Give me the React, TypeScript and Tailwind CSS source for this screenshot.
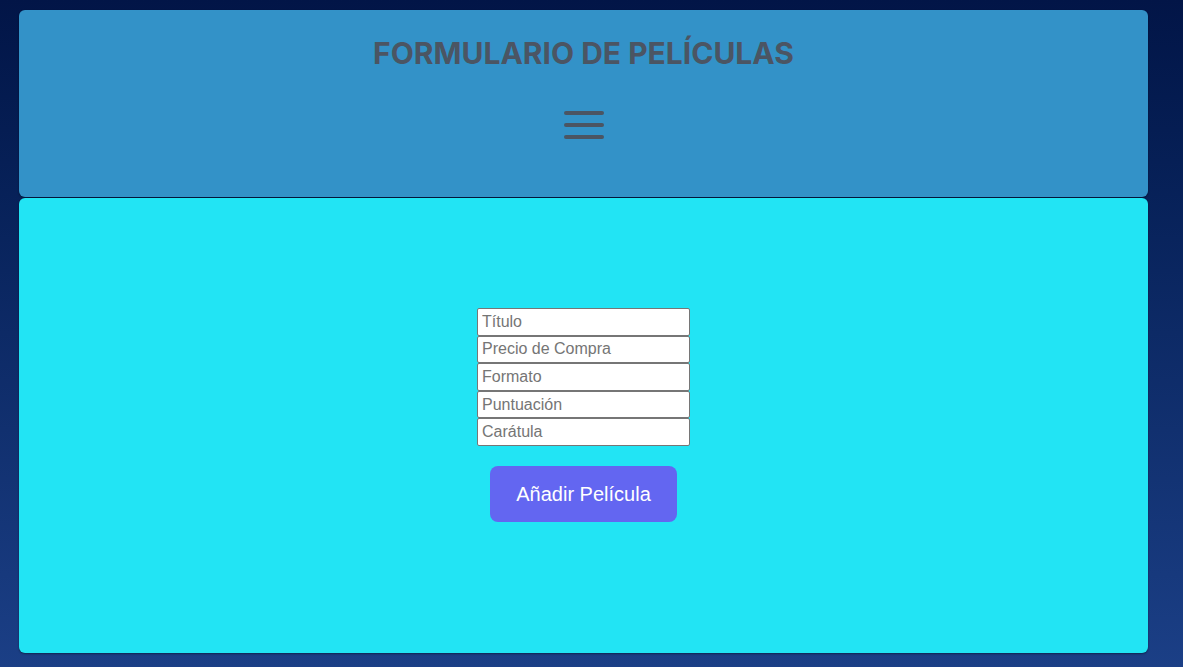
import React from "react";

const fields = ["Título", "Precio de Compra", "Formato", "Puntuación", "Carátula"];

export default function App() {
    return (
        <div className="min-h-screen w-full bg-gradient-to-b from-[#021547] via-[#0d2a66] to-[#1b3f86] pt-[10px] pb-[14px]">
            <div className="ml-[19px] w-[1129px] flex flex-col gap-px">
                {/* Header */}
                <header className="h-[187px] rounded-md bg-[#3392c8] shadow-[0_1px_2px_rgba(0,0,0,0.4)] flex flex-col items-center pt-[25px]">
                    <h1 className="text-[30px] leading-[36px] font-bold text-[#4b5563] font-['Inter',sans-serif]">
                        FORMULARIO DE PELÍCULAS
                    </h1>
                    <button className="mt-[40px] flex flex-col gap-[8px] w-[40px]">
                        <span className="block h-[4px] w-full rounded-full bg-[#4b5563]" />
                        <span className="block h-[4px] w-full rounded-full bg-[#4b5563]" />
                        <span className="block h-[4px] w-full rounded-full bg-[#4b5563]" />
                    </button>
                </header>

                {/* Form */}
                <main className="h-[455px] rounded-md bg-[#22e4f4] shadow-[0_1px_2px_rgba(0,0,0,0.4)] flex flex-col items-center pt-[110px]">
                    <form className="flex flex-col items-center" onSubmit={(e) => e.preventDefault()}>
                        <div className="flex flex-col w-[213px]">
                            {fields.map((f) => (
                                <input
                                    key={f}
                                    type="text"
                                    placeholder={f}
                                    className="h-[27.6px] w-full bg-white border border-[#767676] rounded-[2px] px-[4px] text-[16px] font-['Liberation_Sans',Arial,sans-serif] placeholder:text-[#757575] text-black outline-none"
                                />
                            ))}
                        </div>
                        <button
                            type="submit"
                            className="mt-[20px] w-[187px] h-[56px] rounded-lg bg-[#6366f1] text-white text-[20px] font-['Liberation_Sans',Arial,sans-serif]"
                        >
                            Añadir Película
                        </button>
                    </form>
                </main>
            </div>
        </div>
    );
}
